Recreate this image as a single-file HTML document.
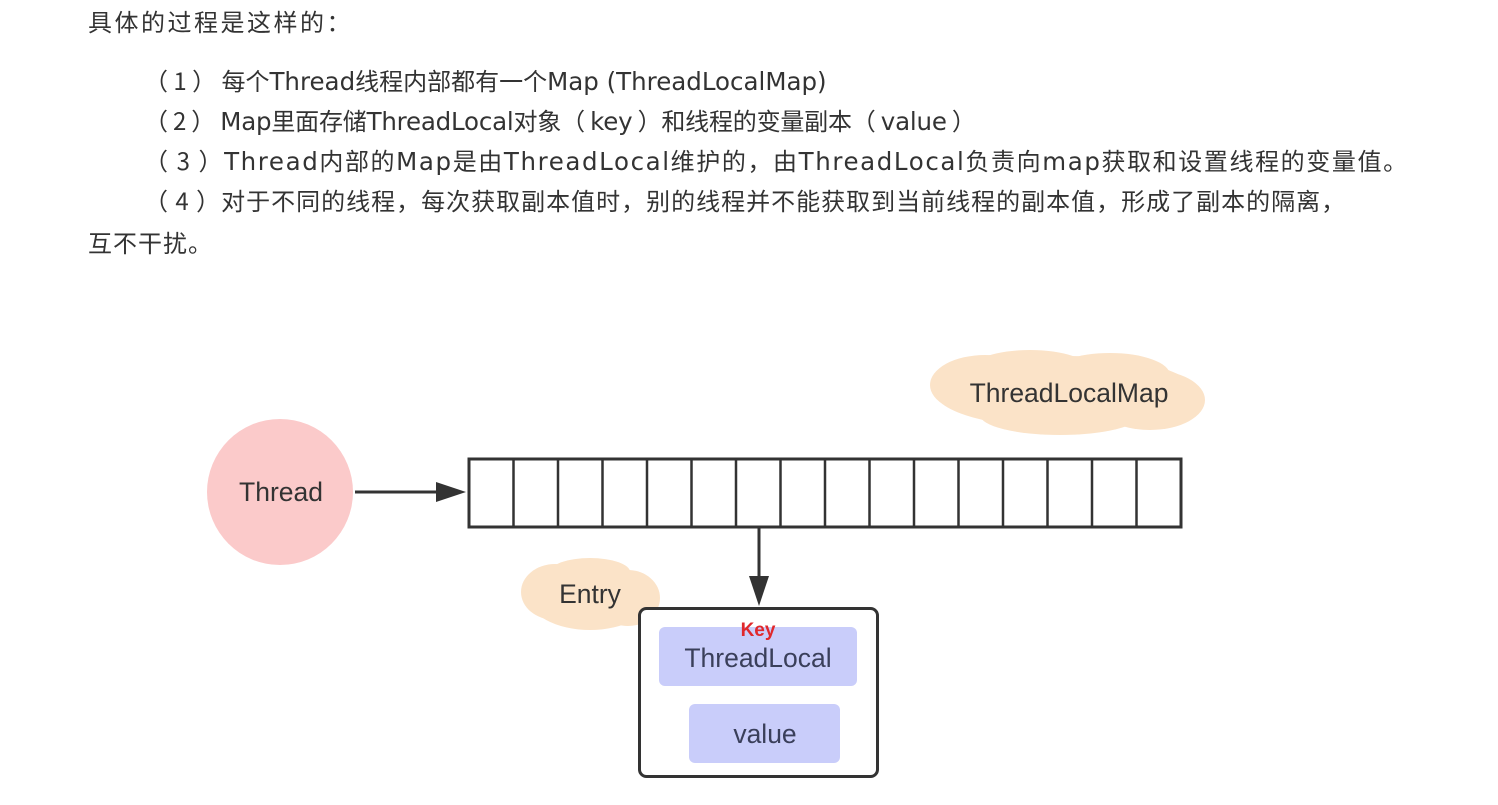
<!DOCTYPE html>
<html><head><meta charset="utf-8"><style>
body{margin:0;width:1498px;height:805px;background:#fff;position:relative;overflow:hidden;font-family:"DejaVu Sans","Noto Sans CJK SC",sans-serif;color:#333}
.t{position:absolute;font-size:24px;white-space:nowrap;line-height:30px;font-family:"Noto Sans CJK SC",sans-serif}
.t b{font-weight:normal;font-family:"DejaVu Sans",sans-serif;font-size:24.5px}
</style></head><body>
<div class="t" style="left:88px;top:6px;letter-spacing:2.5px">具体的过程是这样的：</div>
<div class="t" style="left:144px;top:65px">（ 1 ） 每个<b>Thread</b>线程内部都有一个<b>Map (ThreadLocalMap)</b></div>
<div class="t" style="left:144px;top:105px;letter-spacing:-0.2px">（ 2 ） <b>Map</b>里面存储<b>ThreadLocal</b>对象（ <b>key</b> ）和线程的变量副本（ <b>value</b> ）</div>
<div class="t" style="left:144px;top:145px;letter-spacing:1.6px">（ 3 ）<b>Thread</b>内部的<b>Map</b>是由<b>ThreadLocal</b>维护的，由<b>ThreadLocal</b>负责向<b>map</b>获取和设置线程的变量值。</div>
<div class="t" style="left:144px;top:185px;letter-spacing:1px">（ 4 ）对于不同的线程，每次获取副本值时，别的线程并不能获取到当前线程的副本值，形成了副本的隔离，</div>
<div class="t" style="left:88px;top:227px;letter-spacing:1px">互不干扰。</div>

<svg width="1498" height="805" style="position:absolute;left:0;top:0">
<g fill="#fbe3c8">
<ellipse cx="1065" cy="392" rx="130" ry="36"/><ellipse cx="985" cy="385" rx="55" ry="30"/><ellipse cx="1150" cy="400" rx="55" ry="30"/><ellipse cx="1030" cy="370" rx="60" ry="20"/><ellipse cx="1110" cy="375" rx="60" ry="22"/><ellipse cx="1060" cy="415" rx="80" ry="20"/>
<ellipse cx="590" cy="596" rx="62" ry="34"/><ellipse cx="555" cy="592" rx="34" ry="28"/><ellipse cx="628" cy="598" rx="32" ry="28"/><ellipse cx="590" cy="572" rx="40" ry="14"/>
</g>
<circle cx="280" cy="492" r="73" fill="#fbcaca"/>
<line x1="355" y1="492" x2="440" y2="492" stroke="#333" stroke-width="3"/>
<polygon points="436,482 466,492 436,502" fill="#333"/>
<rect x="469" y="459" width="712" height="68" fill="#fff" stroke="#333" stroke-width="3"/>
<g stroke="#333" stroke-width="2.5">
<line x1="513.5" y1="459" x2="513.5" y2="527"/><line x1="558" y1="459" x2="558" y2="527"/><line x1="602.5" y1="459" x2="602.5" y2="527"/><line x1="647" y1="459" x2="647" y2="527"/><line x1="691.5" y1="459" x2="691.5" y2="527"/><line x1="736" y1="459" x2="736" y2="527"/><line x1="780.5" y1="459" x2="780.5" y2="527"/><line x1="825" y1="459" x2="825" y2="527"/><line x1="869.5" y1="459" x2="869.5" y2="527"/><line x1="914" y1="459" x2="914" y2="527"/><line x1="958.5" y1="459" x2="958.5" y2="527"/><line x1="1003" y1="459" x2="1003" y2="527"/><line x1="1047.5" y1="459" x2="1047.5" y2="527"/><line x1="1092" y1="459" x2="1092" y2="527"/><line x1="1136.5" y1="459" x2="1136.5" y2="527"/>
</g>
<line x1="759" y1="528" x2="759" y2="580" stroke="#333" stroke-width="3"/>
<polygon points="749,576 759,606 769,576" fill="#333"/>
<rect x="639.5" y="608.5" width="238" height="168" rx="7" fill="#fff" stroke="#333" stroke-width="3"/>
<rect x="659" y="627" width="198" height="59" rx="6" fill="#c9cdfa"/>
<rect x="689" y="704" width="151" height="59" rx="6" fill="#c9cdfa"/>
<g font-family="Liberation Sans, sans-serif" fill="#333" font-size="26.5" text-anchor="middle">
<text x="281" y="501">Thread</text>
<text x="1069" y="402">ThreadLocalMap</text>
<text x="590" y="603">Entry</text>
<text x="758" y="667" fill="#3a3f5a">ThreadLocal</text>
<text x="765" y="743" fill="#3a3f5a">value</text>
<text x="758" y="636" fill="#e0282c" font-size="19" font-weight="bold">Key</text>
</g>
</svg>
</body></html>
